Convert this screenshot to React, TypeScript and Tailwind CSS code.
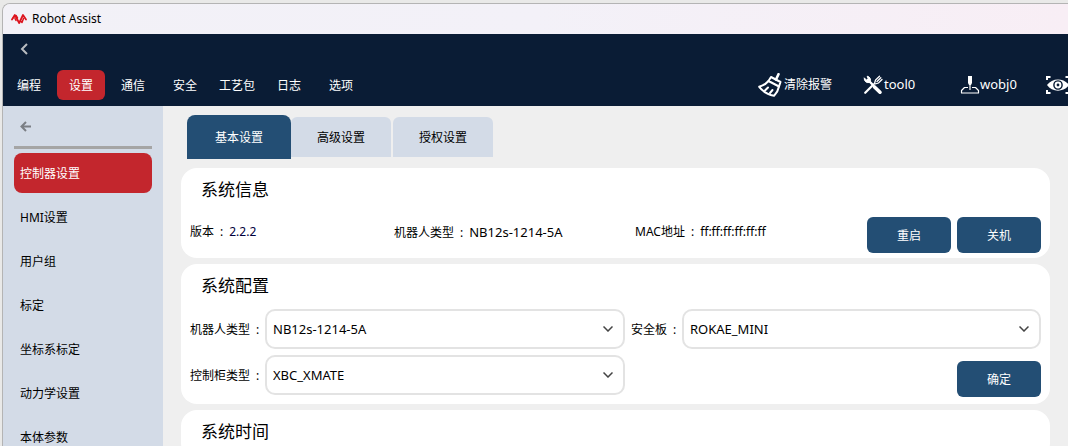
import type { ReactNode } from 'react';

const navItems = ['编程', '设置', '通信', '安全', '工艺包', '日志', '选项'];

const sideItems = ['控制器设置', 'HMI设置', '用户组', '标定', '坐标系标定', '动力学设置', '本体参数'];

const tabs = ['基本设置', '高级设置', '授权设置'];

function Logo() {
  return (
    <svg className="w-4 h-3" viewBox="0 0 16 12" fill="none" stroke="#dc141e" strokeWidth="1.8" strokeLinejoin="round" strokeLinecap="round">
      <path d="M1 6.500 3.800 2 8.200 10 12 2 15 6.500" />
      <path d="M2.500 4.500 5 2.500 6.500 5M4 5.500 5 7.500M9.500 8 11 9.500 12.500 5.500" strokeWidth="1.5" />
    </svg>
  );
}

function BroomIcon() {
  return (
    <svg className="w-6 h-6" viewBox="0 0 24 24" fill="none" stroke="currentColor" strokeWidth="2" strokeLinejoin="round" strokeLinecap="round">
      <path d="M20.500 1.200 18 6.500" strokeWidth="2.600" />
      <path d="M13 4 22.500 9 21 13.500 10.500 8Z" />
      <path d="M10.500 8C8 11 5 12.500 1.200 13.800 4.500 18 9.500 21.500 16 22.800 18.500 20 20.500 16.500 21 13.500" />
      <path d="M7 17.500 10 14.500M12 20 14.500 17" />
    </svg>
  );
}

function ToolIcon() {
  return (
    <svg className="w-5 h-5" viewBox="0 0 20 20" fill="none" stroke="currentColor" strokeLinecap="round">
      <path d="M5 5 10 10" strokeWidth="2.4" />
      <path d="M11.500 12 17 17.200" strokeWidth="3.600" />
      <path d="M1.200 3.200A4 4 0 0 0 7 7.200 4 4 0 0 0 4.200 1.200L5.200 4 4 5Z" fill="currentColor" strokeWidth="1" />
      <path d="M2.200 17.800 10.500 9.500" strokeWidth="2.2" />
      <path d="M11.500 8.500 12.500 5 16.500 1.200M12 9 15.500 8 19 4.500M14 6.500 17.800 2.800" strokeWidth="1.300" />
    </svg>
  );
}

function WobjIcon() {
  return (
    <svg className="w-5 h-5" viewBox="0 0 20 20" fill="none" stroke="currentColor">
      <path d="M8 1h4v7l-1 2H9L8 8Z" fill="currentColor" stroke="none" />
      <path d="M10 9v6" strokeWidth="1.200" />
      <path d="M8 12.500H4.500L1.500 15.500v2.500h17v-2.500l-3-3H12" strokeWidth="1.200" strokeLinejoin="round" />
    </svg>
  );
}

function EyeIcon() {
  return (
    <svg className="w-6 h-5 shrink-0" viewBox="0 0 24 20" fill="none" stroke="currentColor" strokeWidth="2">
      <path d="M1 5V2h3.500M19.500 2H23v3M1 15v3h3.500M19.500 18H23v-3" />
      <path
        d="M1 10C6 2.500 18 2.500 23 10 18 17.500 6 17.500 1 10ZM12 5.200a4.800 4.800 0 1 0 .01 0Z"
        fill="currentColor"
        fillRule="evenodd"
        stroke="none"
      />
      <circle cx="12" cy="10" r="2.400" strokeWidth="2" />
    </svg>
  );
}

function Status({ icon, label, className }: { icon: ReactNode; label: string; className?: string }) {
  return (
    <button type="button" className={`flex items-center text-left ${className ?? ''}`}>
      {icon}
      <span>{label}</span>
    </button>
  );
}

function Card({ title, children }: { title: string; children?: ReactNode }) {
  return (
    <section className="rounded-2xl bg-white px-[9px] pb-[5px]">
      <h2 className="h-11 pl-[11px] text-[17px] leading-[44px]">{title}</h2>
      {children}
    </section>
  );
}

function ActionButton({ children }: { children: ReactNode }) {
  return (
    <button type="button" className="h-9 w-[84px] rounded-md bg-[#234e74] pt-0.5 text-white">
      {children}
    </button>
  );
}

function SelectField({ id, label, value, labelWidth }: { id: string; label: string; value: string; labelWidth: string }) {
  return (
    <div className="flex items-center">
      <label htmlFor={id} className={`shrink-0 pt-0.5 ${labelWidth}`}>
        {label}<span className="pl-1.5">:</span>
      </label>
      <div className="relative flex-1">
        <select id={id} className="h-10 w-full appearance-none rounded-[10px] border-2 border-[#e3e3e3] bg-white px-1.5 pt-0.5 text-[13px]">
          <option>{value}</option>
        </select>
        <svg className="pointer-events-none absolute right-3 top-[17px] h-1.5 w-2.5" viewBox="0 0 10 6" fill="none" stroke="#444" strokeWidth="1.500">
          <path d="M0.500 0.500 5 5 9.500 0.500" />
        </svg>
      </div>
    </div>
  );
}

export default function App() {
  return (
    <div className="h-screen overflow-hidden bg-[#e9e9e8] pl-0.5 pt-[3px] font-['Noto_Sans','Noto_Sans_CJK_SC',sans-serif] text-xs text-black">
      <div className="flex h-full flex-col overflow-hidden rounded-tl-lg border-l border-t border-[#b4b4b4] bg-[#efefef]">
        {/* Title bar */}
        <div className="flex h-[30px] shrink-0 items-center gap-[5px] bg-linear-to-r from-[#f2f1f7] via-[#f3f1f8] to-[#f8eef5] pl-2">
          <Logo />
          <span>Robot Assist</span>
        </div>

        {/* Header */}
        <header className="h-[72px] shrink-0 bg-[#0a1c35] text-white">
          <button type="button" aria-label="Back" className="block h-[30px] pl-[17px] pr-2">
            <svg className="h-3 w-2" viewBox="0 0 8 12" fill="none" stroke="#b9bcc0" strokeWidth="2">
              <path d="M7 1 2 6 7 11" />
            </svg>
          </button>
          <div className="flex h-[42px] items-center justify-between">
            <nav className="flex shrink-0 gap-1 pl-0.5">
              {navItems.map((item) => (
                <button
                  key={item}
                  type="button"
                  className={`h-[30px] w-12 rounded-md pt-0.5 ${item === '设置' ? 'bg-[#c3262d]' : ''}`}
                >
                  {item}
                </button>
              ))}
            </nav>
            <div className="-mr-0.5 flex shrink-0 items-center">
              <Status icon={<BroomIcon />} label="清除报警" className="w-[105px] gap-0.5" />
              <Status icon={<ToolIcon />} label="tool0" className="w-[97px] gap-px text-[13px]" />
              <Status icon={<WobjIcon />} label="wobj0" className="w-[86px] text-[13px]" />
              <EyeIcon />
            </div>
          </div>
        </header>

        <div className="flex min-h-0 flex-1">
          {/* Sidebar */}
          <aside className="w-40 shrink-0 bg-[#d3dbe7] px-[11px]">
            <div className="h-[43px] border-b-[3px] border-[#a5a5a5]">
              <button type="button" aria-label="Collapse" className="flex h-10 items-center pl-1.5">
                <svg className="h-[11px] w-[11px]" viewBox="0 0 11 11" fill="none" stroke="#7b7f85" strokeWidth="2">
                  <path d="M6 1 1.500 5.500 6 10M1.500 5.500H11" />
                </svg>
              </button>
            </div>
            <ul className="mt-1 flex flex-col gap-1">
              {sideItems.map((item, i) => (
                <li key={item}>
                  <button
                    type="button"
                    className={`h-10 w-full rounded-lg px-1.5 pt-0.5 text-left ${i === 0 ? 'bg-[#c3262d] text-white' : ''}`}
                  >
                    {item}
                  </button>
                </li>
              ))}
            </ul>
          </aside>

          {/* Content */}
          <main className="min-w-0 flex-1 px-[18px] pt-[9px]">
            <div role="tablist" className="flex h-[53px] pl-1.5">
              {tabs.map((tab, i) => (
                <button
                  key={tab}
                  type="button"
                  role="tab"
                  aria-selected={i === 0}
                  className={
                    i === 0
                      ? 'h-11 w-[104px] rounded-t-lg bg-[#234e74] pt-0.5 text-white'
                      : 'mr-0.5 mt-0.5 h-10 w-[100px] rounded-t-md bg-[#d3dbe7] pt-0.5'
                  }
                >
                  {tab}
                </button>
              ))}
            </div>

            <div className="flex flex-col gap-1.5">
              <Card title="系统信息">
                <div className="flex items-end pt-[5px]">
                  <div className="grid h-9 flex-1 grid-cols-[204px_241px_1fr] leading-[30px]">
                    <span>版本<span className="px-1.5">:</span><span className="text-[#00003c]">2.2.2</span></span>
                    <span>机器人类型<span className="px-1.5">:</span><span className="text-[13px]">NB12s-1214-5A</span></span>
                    <span>MAC地址<span className="px-1.5">:</span>ff:ff:ff:ff:ff:ff</span>
                  </div>
                  <div className="flex shrink-0 gap-1.5">
                    <ActionButton>重启</ActionButton>
                    <ActionButton>关机</ActionButton>
                  </div>
                </div>
              </Card>

              <Card title="系统配置">
                <div className="grid grid-cols-[435px_1fr] items-start gap-1.5 pt-px pb-0.5">
                  <SelectField id="robot" label="机器人类型" value="NB12s-1214-5A" labelWidth="w-[75px]" />
                  <SelectField id="safety" label="安全板" value="ROKAE_MINI" labelWidth="w-[51px]" />
                  <SelectField id="cabinet" label="控制柜类型" value="XBC_XMATE" labelWidth="w-[75px]" />
                  <div className="flex justify-end pt-1.5">
                    <ActionButton>确定</ActionButton>
                  </div>
                </div>
              </Card>

              <Card title="系统时间" />
            </div>
          </main>
        </div>
      </div>
    </div>
  );
}
